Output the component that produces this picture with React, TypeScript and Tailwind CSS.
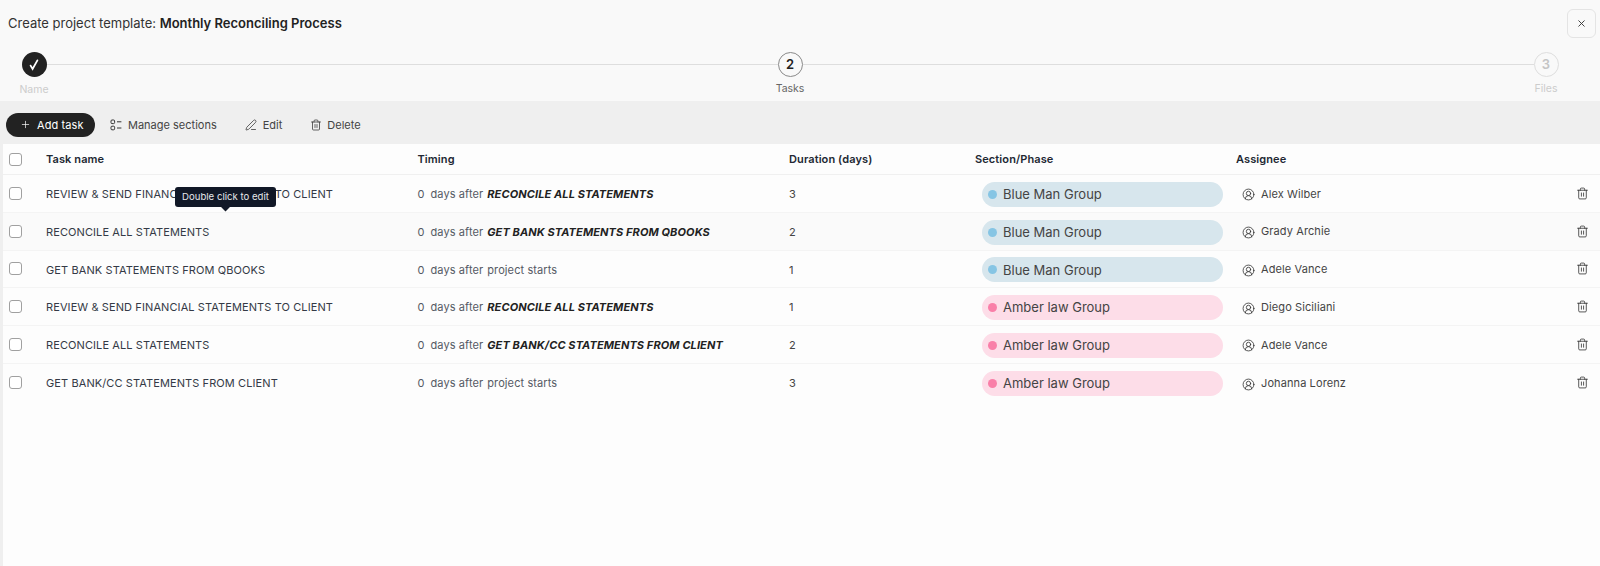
import { CircleUserRound, PenLine, Plus, Trash2, X } from "lucide-react";

const font = { fontFamily: "Inter, 'Noto Sans', sans-serif" };

type Task = {
  name: string;
  after?: string;
  duration: number;
  section: "blue" | "amber";
  assignee: string;
};

const tasks: Task[] = [
  { name: "REVIEW & SEND FINANCIAL STATEMENTS TO CLIENT", after: "RECONCILE ALL STATEMENTS", duration: 3, section: "blue", assignee: "Alex Wilber" },
  { name: "RECONCILE ALL STATEMENTS", after: "GET BANK STATEMENTS FROM QBOOKS", duration: 2, section: "blue", assignee: "Grady Archie" },
  { name: "GET BANK STATEMENTS FROM QBOOKS", duration: 1, section: "blue", assignee: "Adele Vance" },
  { name: "REVIEW & SEND FINANCIAL STATEMENTS TO CLIENT", after: "RECONCILE ALL STATEMENTS", duration: 1, section: "amber", assignee: "Diego Siciliani" },
  { name: "RECONCILE ALL STATEMENTS", after: "GET BANK/CC STATEMENTS FROM CLIENT", duration: 2, section: "amber", assignee: "Adele Vance" },
  { name: "GET BANK/CC STATEMENTS FROM CLIENT", duration: 3, section: "amber", assignee: "Johanna Lorenz" },
];

const gridCols = "grid grid-cols-[43px_371.5px_371.5px_186px_261px_1fr] items-center";

function Step({ label, state, n }: { label: string; state: "done" | "active" | "todo"; n?: number }) {
  return (
    <div className="flex w-[25px] flex-col items-center">
      {state === "done" && (
        <div className="flex h-[25px] w-[25px] items-center justify-center rounded-full bg-[#222222]">
          <svg width="14" height="14" viewBox="0 0 14 14" fill="none" stroke="white" strokeWidth="1.8" strokeLinecap="round">
            <path d="M3.6 7.6 L5.6 11 L10.4 2.4" />
          </svg>
        </div>
      )}
      {state === "active" && (
        <div className="flex h-[25px] w-[25px] items-center justify-center rounded-full border border-[#8a8a8a] text-[13px] font-semibold text-[#222222]">
          {n}
        </div>
      )}
      {state === "todo" && (
        <div className="flex h-[25px] w-[25px] items-center justify-center rounded-full border border-[#dedede] text-[13px] font-semibold text-[#c4c4c4]">
          {n}
        </div>
      )}
      <span
        className={`text-[10.5px] leading-[14px] ${
          state === "done" ? "mt-[5.5px]" : "mt-[4.5px]"
        } ${state === "active" ? "text-[#666666]" : "text-[#cccccc]"}`}
      >
        {label}
      </span>
    </div>
  );
}

function SectionsIcon() {
  return (
    <svg width="12" height="12" viewBox="0 0 12 12" fill="none" stroke="#333333" strokeWidth="1">
      <rect x="1" y="1" width="3.6" height="3.6" rx="1" />
      <rect x="1" y="7.2" width="3.6" height="3.6" rx="1" />
      <path d="M7 2.8 H11.4 M7 9 H11.4" />
    </svg>
  );
}

function Row({ task, shaded, last }: { task: Task; shaded: boolean; last: boolean }) {
  const blue = task.section === "blue";
  return (
    <div className={`${gridCols} h-[37.75px] ${last ? "" : "border-b border-[#f4f4f4]"} ${shaded ? "bg-[#fafafa]" : ""}`}>
      <div className="pl-[6px]">
        <div className="h-[13px] w-[13px] rounded-[3px] border border-[#a0a0a0] bg-white" />
      </div>
      <div className="pt-[2px] text-[11px] tracking-[0.1px] text-[#343a46]">{task.name}</div>
      <div className="flex items-center pt-[2px] text-[11px] text-[#555a64]">
        <span className="w-[13px]">0</span>
        <span className="tracking-[0.1px]">days after</span>
        {task.after ? (
          <span className="ml-[4px] font-bold italic tracking-[0.1px] text-[#222222]">{task.after}</span>
        ) : (
          <span className="ml-[4px] tracking-[0.1px]">project starts</span>
        )}
      </div>
      <div className="pt-[2px] text-[11px] text-[#444444]">{task.duration}</div>
      <div className="pl-[7px] pt-[2px]">
        <div className={`flex h-[25px] w-[241px] items-center rounded-full pl-[6px] ${blue ? "bg-[#d7e6ed]" : "bg-[#fddde8]"}`}>
          <span className={`h-[9px] w-[9px] rounded-full ${blue ? "bg-[#86c5e4]" : "bg-[#f97fa8]"}`} />
          <span className="ml-[6px] pt-[1px] text-[13px] text-[#444444]">
            {blue ? "Blue Man Group" : "Amber law Group"}
          </span>
        </div>
      </div>
      <div className="flex items-center justify-between pl-[6px] pr-[11px]">
        <div className="flex items-center gap-[6px] pt-[1px] text-[11px] tracking-[0.1px] text-[#444444]">
          <CircleUserRound size={13} strokeWidth={1.5} className="mt-[2px] text-[#333333]" />
          {task.assignee}
        </div>
        <Trash2 size={13} strokeWidth={1.5} className="text-[#333333]" />
      </div>
    </div>
  );
}

export default function App() {
  return (
    <div className="h-[566px] w-[1600px] overflow-hidden bg-[#fdfdfd]" style={font}>
      <div className="h-[101px] bg-[#f9f9f9]">
        <div className="flex h-[48px] items-start justify-between pl-[8px] pr-[4px] pt-[9px]">
          <h1 className="mt-[5px] text-[13px] leading-[18px] text-[#333333]">
            Create project template: <span className="font-semibold text-[#222222]">Monthly Reconciling Process</span>
          </h1>
          <button className="flex h-[29px] w-[29px] items-center justify-center rounded-[6px] border border-[#e4e4e4]">
            <X size={11} className="text-[#333333]" />
          </button>
        </div>
        <div className="mt-[4px] flex items-start pl-[21.5px] pr-[41.5px]">
          <Step label="Name" state="done" />
          <div className="mt-[12px] h-px flex-1 bg-[#dedede]" />
          <Step label="Tasks" state="active" n={2} />
          <div className="mt-[12px] h-px flex-1 bg-[#dedede]" />
          <Step label="Files" state="todo" n={3} />
        </div>
      </div>

      <div className="flex h-[43px] items-center bg-[#efefef] pl-[6px] pt-[4px] text-[11px] text-[#444444]">
        <button className="flex h-[24px] w-[89px] items-center rounded-full bg-[#222222] pl-[13.5px] text-white">
          <Plus size={11} strokeWidth={1.5} />
          <span className="ml-[6.5px] pt-[1px] tracking-[0.1px]">Add task</span>
        </button>
        <div className="ml-[15px] flex items-center gap-[6px]">
          <SectionsIcon />
          <span className="pt-[1px]">Manage sections</span>
        </div>
        <div className="ml-[28px] flex items-center gap-[6px]">
          <PenLine size={12} strokeWidth={1.5} className="text-[#333333]" />
          <span className="pt-[1px]">Edit</span>
        </div>
        <div className="ml-[28px] flex items-center gap-[5px]">
          <Trash2 size={12} strokeWidth={1.5} className="text-[#333333]" />
          <span className="pt-[1px]">Delete</span>
        </div>
      </div>

      <div className="flex h-[422px]">
        <div className="w-[3px] bg-[#efefef]" />
        <div className="relative flex-1">
          <div className={`${gridCols} h-[31px] border-b border-[#f0f0f0] text-[11px] font-semibold tracking-[0.1px] text-[#222833]`}>
            <div className="pl-[6px]">
              <div className="h-[13px] w-[13px] rounded-[3px] border border-[#a0a0a0] bg-white" />
            </div>
            <div className="pt-[1px]">Task name</div>
            <div className="pt-[1px]">Timing</div>
            <div className="pt-[1px]">Duration (days)</div>
            <div className="pt-[1px]">Section/Phase</div>
            <div className="pt-[1px]">Assignee</div>
          </div>
          {tasks.map((task, i) => (
            <Row key={i} task={task} shaded={i === 1} last={i === tasks.length - 1} />
          ))}
          <div className="absolute left-[172px] top-[43px] flex h-[20px] w-[101px] items-center justify-center rounded-[3px] bg-[#111827] text-[9.6px] text-[#e5e7eb]">
            Double click to edit
            <div className="absolute left-[47px] top-[16px] h-[7px] w-[7px] rotate-45 bg-[#111827]" />
          </div>
        </div>
      </div>
    </div>
  );
}
